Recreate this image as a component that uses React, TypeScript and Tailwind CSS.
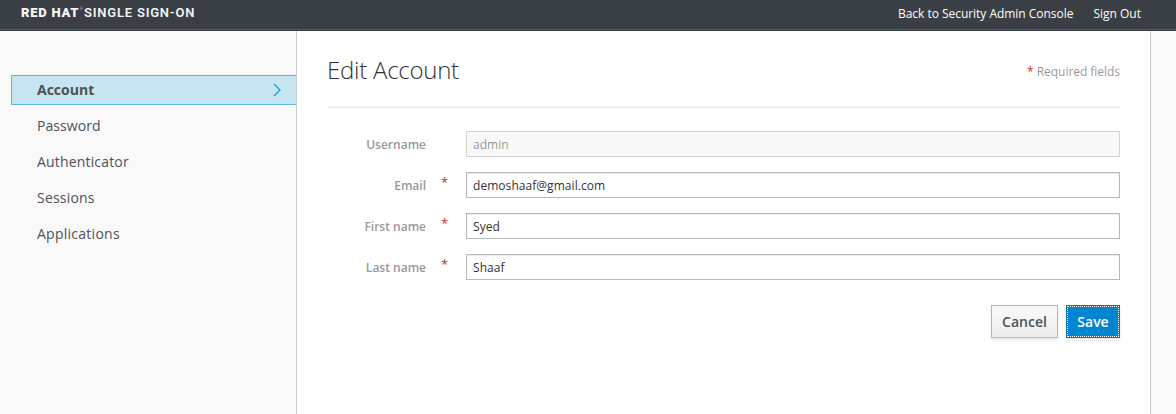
const navItems = [
  { label: 'Password', tracking: 'tracking-[0.07px]' },
  { label: 'Authenticator', tracking: 'tracking-[0.17px]' },
  { label: 'Sessions', tracking: 'tracking-[0.2px]' },
  { label: 'Applications', tracking: 'tracking-[0.26px]' },
];

const fields = [
  { label: 'Username', value: 'admin', required: false, disabled: true },
  { label: 'Email', value: 'demoshaaf@gmail.com', required: true, disabled: false },
  { label: 'First name', value: 'Syed', required: true, disabled: false },
  { label: 'Last name', value: 'Shaaf', required: true, disabled: false },
];

function Header() {
  return (
    <header className="flex h-[31px] shrink-0 justify-between border-b border-[#393f45] bg-[#393f45] text-white">
      <div className="flex h-[30px] w-full items-start justify-between border-b border-[#53565b] pl-[21px] pr-[35px]">
        <div className="flex pt-[5px] font-['Roboto',sans-serif] text-[13px] leading-4 text-[#f5f5f5]">
          <span className="w-[59px] whitespace-nowrap font-black tracking-[0.75px]">RED HAT</span>
          <span className="w-[4px] text-[3px] leading-[9px] opacity-70">®</span>
          <span className="whitespace-nowrap font-semibold tracking-[0.8px]">SINGLE SIGN-ON</span>
        </div>
        <nav className="flex gap-5 pt-[5px] text-[12px] leading-[17px]">
          <a className="tracking-[-0.03px]">Back to Security Admin Console</a>
          <a>Sign Out</a>
        </nav>
      </div>
    </header>
  );
}

function Sidebar() {
  return (
    <aside className="w-[296px] shrink-0 pl-[11px] pt-[44px] text-[14px] text-[#4d5258]">
      <div className="flex h-[30px] items-center justify-between border border-r-0 border-[#58b8de] bg-[#c7e5f0] pl-[25px] pr-[14px] font-bold">
        <span className="pb-0.5">Account</span>
        <svg width="10" height="14" viewBox="0 0 10 14" fill="none" stroke="#1ba1d7" strokeWidth="1.4">
          <path d="M2 1L8 7L2 13" />
        </svg>
      </div>
      <ul className="mt-[2px]">
        {navItems.map((item) => (
          <li key={item.label} className="flex h-9 items-center pl-[26px]">
            <span className={item.tracking}>{item.label}</span>
          </li>
        ))}
      </ul>
    </aside>
  );
}

export default function App() {
  return (
    <div className="flex h-[414px] flex-col overflow-hidden bg-[#f9f9f9] font-['Open_Sans',sans-serif]">
      <Header />
      <div className="flex min-h-0 flex-1">
        <Sidebar />
        <main className="w-[855px] border-x border-[#cccccc] bg-white px-[30px]">
          <div className="flex h-[77px] items-start justify-between border-b border-[#e6e6e6]">
            <h1 className="pt-[23px] text-[24px] font-light leading-8 tracking-[-0.25px] text-[#333333]">Edit Account</h1>
            <p className="pt-8 text-[12px] leading-[17px] tracking-[-0.04px] text-[#999999]">
              <span className="text-[#cc2e12]">*</span> Required fields
            </p>
          </div>
          <form className="flex flex-col gap-[15px] pt-[23px] text-[12px]">
            {fields.map((field) => (
              <div key={field.label} className="flex h-[26px] items-center">
                <label className="w-[99px] pt-0.5 text-right font-semibold text-[#999999]">{field.label}</label>
                <span className="w-[40px] self-start pl-[15px] text-[13px] leading-[20px] text-[#cc2e12]">
                  {field.required ? '*' : ''}
                </span>
                <input
                  className="h-[26px] min-w-0 flex-1 border border-[#b8b8b8] bg-white px-1.5 tracking-[0.05px] text-[#333333] shadow-[inset_0_1px_1px_rgba(0,0,0,0.075)] outline-none disabled:border-[#d3d3d3] disabled:bg-[#f8f8f8] disabled:text-[#999999] disabled:shadow-none"
                  defaultValue={field.value}
                  disabled={field.disabled}
                />
              </div>
            ))}
            <div className="mt-[10px] flex justify-end gap-2 text-[14px] font-semibold">
              <button type="button" className="h-[33px] w-[67px] border border-[#b7b7b7] bg-linear-to-b from-[#fafafa] to-[#ededed] text-[#4d5258] shadow-[0_2px_3px_rgba(0,0,0,0.1)]">
                Cancel
              </button>
              <button type="button" className="flex h-[33px] w-[54px] border border-[#0076b0] bg-[#0085cf] text-white shadow-[0_2px_3px_rgba(0,0,0,0.1)]">
                <span className="flex h-full w-full items-center justify-center border border-dotted border-white">Save</span>
              </button>
            </div>
          </form>
        </main>
      </div>
    </div>
  );
}
